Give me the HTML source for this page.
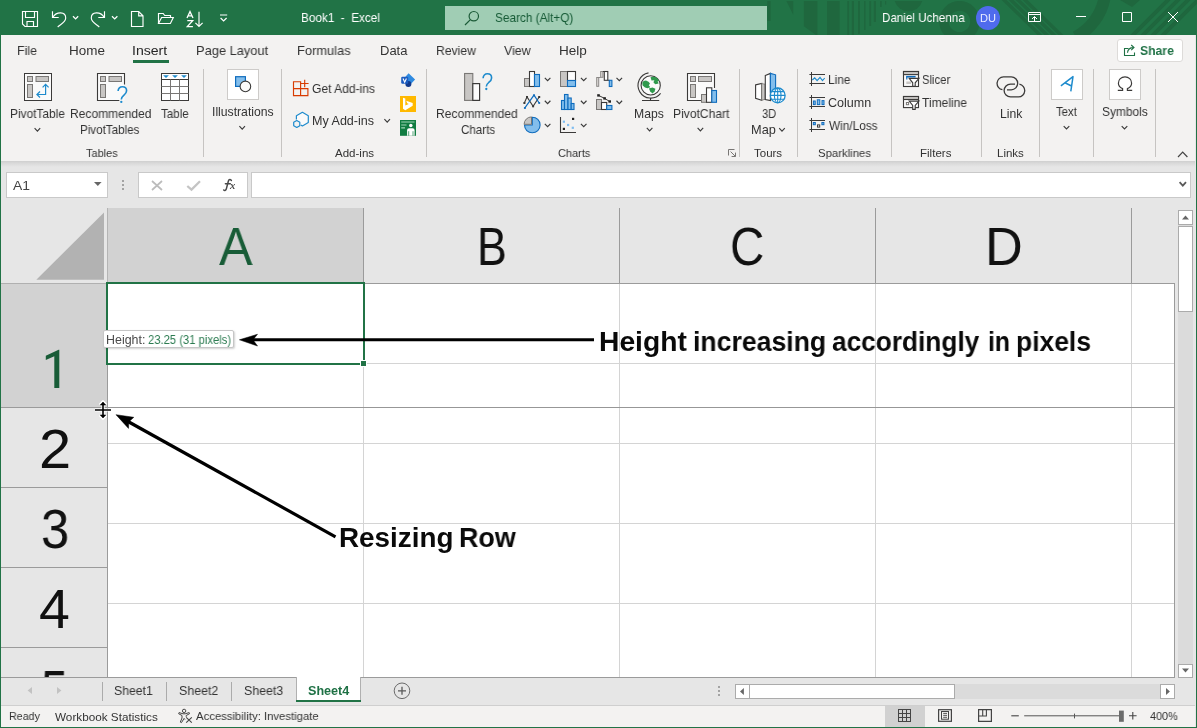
<!DOCTYPE html>
<html><head><meta charset="utf-8"><title>Book1 - Excel</title>
<style>
html,body{margin:0;padding:0;}
body{width:1197px;height:728px;overflow:hidden;background:#e6e6e6;position:relative;font-family:"Liberation Sans",sans-serif;}
.t{position:absolute;white-space:pre;transform-origin:0 0;will-change:transform;}
.r{position:absolute;box-sizing:border-box;}
svg.ov{position:absolute;left:0;top:0;}
#root{position:absolute;left:0;top:0;width:1197px;height:728px;overflow:hidden;}
</style></head><body>
<div id="root">
<div class="r" style="left:0px;top:0px;width:1197.00px;height:35.00px;background:#217346;"></div>
<svg class="ov" width="1197" height="35" viewBox="0 0 1197 35"><g fill="#1f673e" stroke="none"><rect x="767.3" y="1" width="3.3" height="20"/><path d="M786.4 1 H793.2 V14.7 Z"/><path d="M803.9 1 H817.4 V35 H816 L803.9 26.2 Z"/><rect x="827" y="1" width="12.6" height="34"/><rect x="847.3" y="1" width="1.8" height="34"/><rect x="851.8" y="1" width="2.2" height="34"/><rect x="858" y="1" width="1.8" height="32.8"/><rect x="864.2" y="1" width="1.3" height="29"/><rect x="869.3" y="1" width="1.8" height="25"/><rect x="873.8" y="1" width="2.2" height="21"/><rect x="880" y="1" width="1.7" height="6"/><rect x="885" y="1" width="1.2" height="3.5"/><path d="M894.7 1 A14.4 14.4 0 0 0 922.3 1 Z"/></g><circle cx="959.5" cy="21.4" r="15.5" fill="none" stroke="#1f673e" stroke-width="9.6"/><g stroke="#1f673e" stroke-width="3.4" fill="none"><path d="M1002 -2 L1042 37 M1009 -2 L1049 37 M1016 -2 L1056 37 M1023 -2 L1063 37"/></g><path d="M1104.5 -2 A56 56 0 0 1 1075.7 37" fill="none" stroke="#1f673e" stroke-width="12"/><g stroke="#1f673e" stroke-width="4" fill="none"><path d="M1131 37 L1170 -2 M1141 37 L1180 -2 M1151 37 L1190 -2 M1161 37 L1200 -2"/></g><path d="M1120 0 H1140 L1132 7 Z" fill="#1f673e"/></svg>
<div class="r" style="left:445px;top:6px;width:322.00px;height:24.00px;background:#a0cdb4;"></div>
<span class="t" style="left:301.05px;top:9.00px;font-size:13px;line-height:17px;color:#fff;transform:scaleX(0.9024);">Book1  -  Excel</span>
<span class="t" style="left:495.00px;top:9.00px;font-size:13px;line-height:17px;color:#155a35;transform:scaleX(0.9071);">Search (Alt+Q)</span>
<span class="t" style="left:881.76px;top:9.00px;font-size:13px;line-height:17px;color:#fff;transform:scaleX(0.8945);">Daniel Uchenna</span>
<div class="r" style="left:1px;top:35px;width:1194.00px;height:125.50px;background:#f3f2f1;"></div>
<div class="r" style="left:1px;top:160.5px;width:1194.00px;height:6.50px;background:linear-gradient(#cfcfcf,#dadada 40%,#e6e6e6);"></div>
<span class="t" style="left:17.30px;top:42.00px;font-size:13px;line-height:17px;color:#333333;transform:scaleX(0.9561);">File</span>
<span class="t" style="left:69.11px;top:42.00px;font-size:13px;line-height:17px;color:#333333;transform:scaleX(1.0363);">Home</span>
<span class="t" style="left:132.30px;top:42.00px;font-size:13px;line-height:17px;color:#262626;transform:scaleX(1.0816);">Insert</span>
<span class="t" style="left:196.16px;top:42.00px;font-size:13px;line-height:17px;color:#333333;transform:scaleX(0.9875);">Page Layout</span>
<span class="t" style="left:297.36px;top:42.00px;font-size:13px;line-height:17px;color:#333333;transform:scaleX(0.9886);">Formulas</span>
<span class="t" style="left:379.67px;top:42.00px;font-size:13px;line-height:17px;color:#333333;transform:scaleX(0.9830);">Data</span>
<span class="t" style="left:435.62px;top:42.00px;font-size:13px;line-height:17px;color:#333333;transform:scaleX(0.9364);">Review</span>
<span class="t" style="left:504.25px;top:42.00px;font-size:13px;line-height:17px;color:#333333;transform:scaleX(0.9553);">View</span>
<span class="t" style="left:558.51px;top:42.00px;font-size:13px;line-height:17px;color:#333333;transform:scaleX(1.0417);">Help</span>
<div class="r" style="left:133px;top:60.3px;width:35.70px;height:2.50px;background:#217346;"></div>
<div class="r" style="left:1116.6px;top:38.6px;width:66.80px;height:23.00px;background:#fff;border:1px solid #dddbd9;border-radius:3px;"></div>
<span class="t" style="left:1140.17px;top:42.00px;font-size:13px;line-height:17px;color:#1f7145;transform:scaleX(0.9364);font-weight:700;">Share</span>
<span class="t" style="left:10.42px;top:106.00px;font-size:12.2px;line-height:16px;color:#333333;transform:scaleX(0.9753);">PivotTable</span>
<span class="t" style="left:69.51px;top:106.00px;font-size:12.2px;line-height:16px;color:#333333;transform:scaleX(0.9870);">Recommended</span>
<span class="t" style="left:80.45px;top:122.00px;font-size:12.2px;line-height:16px;color:#333333;transform:scaleX(0.9525);">PivotTables</span>
<span class="t" style="left:160.96px;top:106.00px;font-size:12.2px;line-height:16px;color:#333333;transform:scaleX(0.9542);">Table</span>
<span class="t" style="left:211.50px;top:104.00px;font-size:12.2px;line-height:16px;color:#333333;transform:scaleX(1.0000);">Illustrations</span>
<span class="t" style="left:312.11px;top:81.00px;font-size:12.2px;line-height:16px;color:#333333;transform:scaleX(0.9896);">Get Add-ins</span>
<span class="t" style="left:311.67px;top:113.00px;font-size:12.2px;line-height:16px;color:#333333;transform:scaleX(1.0297);">My Add-ins</span>
<span class="t" style="left:436.41px;top:106.00px;font-size:12.2px;line-height:16px;color:#333333;transform:scaleX(0.9907);">Recommended</span>
<span class="t" style="left:460.93px;top:122.00px;font-size:12.2px;line-height:16px;color:#333333;transform:scaleX(0.9528);">Charts</span>
<span class="t" style="left:634.41px;top:106.00px;font-size:12.2px;line-height:16px;color:#333333;transform:scaleX(0.9947);">Maps</span>
<span class="t" style="left:672.51px;top:106.00px;font-size:12.2px;line-height:16px;color:#333333;transform:scaleX(0.9902);">PivotChart</span>
<span class="t" style="left:761.59px;top:106.00px;font-size:12.2px;line-height:16px;color:#333333;transform:scaleX(0.9110);">3D</span>
<span class="t" style="left:750.65px;top:122.00px;font-size:12.2px;line-height:16px;color:#333333;transform:scaleX(1.0472);">Map</span>
<span class="t" style="left:827.73px;top:72.00px;font-size:12.2px;line-height:16px;color:#333333;transform:scaleX(0.9745);">Line</span>
<span class="t" style="left:828.08px;top:95.00px;font-size:12.2px;line-height:16px;color:#333333;transform:scaleX(1.0308);">Column</span>
<span class="t" style="left:828.65px;top:118.00px;font-size:12.2px;line-height:16px;color:#333333;transform:scaleX(0.9678);">Win/Loss</span>
<span class="t" style="left:921.79px;top:72.00px;font-size:12.2px;line-height:16px;color:#333333;transform:scaleX(0.9228);">Slicer</span>
<span class="t" style="left:922.45px;top:95.00px;font-size:12.2px;line-height:16px;color:#333333;transform:scaleX(0.9877);">Timeline</span>
<span class="t" style="left:999.50px;top:106.00px;font-size:12.2px;line-height:16px;color:#333333;transform:scaleX(1.0023);">Link</span>
<span class="t" style="left:1056.17px;top:104.00px;font-size:12.2px;line-height:16px;color:#333333;transform:scaleX(0.9342);">Text</span>
<span class="t" style="left:1101.66px;top:104.00px;font-size:12.2px;line-height:16px;color:#333333;transform:scaleX(0.9771);">Symbols</span>
<span class="t" style="left:86.16px;top:146.00px;font-size:11.5px;line-height:14px;color:#333333;transform:scaleX(0.9540);">Tables</span>
<span class="t" style="left:334.70px;top:146.00px;font-size:11.5px;line-height:14px;color:#333333;transform:scaleX(1.0026);">Add-ins</span>
<span class="t" style="left:558.48px;top:146.00px;font-size:11.5px;line-height:14px;color:#333333;transform:scaleX(0.9544);">Charts</span>
<span class="t" style="left:754.05px;top:146.00px;font-size:11.5px;line-height:14px;color:#333333;transform:scaleX(0.9836);">Tours</span>
<span class="t" style="left:818.01px;top:146.00px;font-size:11.5px;line-height:14px;color:#333333;transform:scaleX(0.9867);">Sparklines</span>
<span class="t" style="left:920.40px;top:146.00px;font-size:11.5px;line-height:14px;color:#333333;transform:scaleX(1.0033);">Filters</span>
<span class="t" style="left:996.62px;top:146.00px;font-size:11.5px;line-height:14px;color:#333333;transform:scaleX(0.9824);">Links</span>
<div class="r" style="left:203px;top:69px;width:1.00px;height:88.00px;background:#c6c4c2;"></div>
<div class="r" style="left:281px;top:69px;width:1.00px;height:88.00px;background:#c6c4c2;"></div>
<div class="r" style="left:426px;top:69px;width:1.00px;height:88.00px;background:#c6c4c2;"></div>
<div class="r" style="left:739px;top:69px;width:1.00px;height:88.00px;background:#c6c4c2;"></div>
<div class="r" style="left:797px;top:69px;width:1.00px;height:88.00px;background:#c6c4c2;"></div>
<div class="r" style="left:891px;top:69px;width:1.00px;height:88.00px;background:#c6c4c2;"></div>
<div class="r" style="left:981px;top:69px;width:1.00px;height:88.00px;background:#c6c4c2;"></div>
<div class="r" style="left:1039px;top:69px;width:1.00px;height:88.00px;background:#c6c4c2;"></div>
<div class="r" style="left:1093px;top:69px;width:1.00px;height:88.00px;background:#c6c4c2;"></div>
<div class="r" style="left:1155px;top:69px;width:1.00px;height:88.00px;background:#c6c4c2;"></div>
<div class="r" style="left:227px;top:69px;width:32.00px;height:31.00px;background:#fff;border:1px solid #cdcbc9;"></div>
<div class="r" style="left:1051px;top:69px;width:32.00px;height:31.00px;background:#fff;border:1px solid #cdcbc9;"></div>
<div class="r" style="left:1109px;top:69px;width:32.00px;height:31.00px;background:#fff;border:1px solid #cdcbc9;"></div>
<div class="r" style="left:6px;top:172px;width:102.00px;height:26.00px;background:#fff;border:1px solid #c9c9c9;"></div>
<span class="t" style="left:13.00px;top:177.00px;font-size:13px;line-height:17px;color:#444;transform:scaleX(1.0689);">A1</span>
<div class="r" style="left:138px;top:172px;width:110.00px;height:26.00px;background:#fff;border:1px solid #c9c9c9;"></div>
<div class="r" style="left:251px;top:172px;width:940.00px;height:26.00px;background:#fff;border:1px solid #c9c9c9;"></div>
<span class="t" style="left:229.60px;top:179.00px;font-size:10px;line-height:13px;color:#4a4a4a;transform:scaleX(1.0505);font-weight:700;font-style:italic;font-family:'Liberation Serif', serif;">x</span>
<div class="r" style="left:107px;top:283px;width:1068.00px;height:394.00px;background:#fff;"></div>
<div class="r" style="left:107px;top:208px;width:257.00px;height:74.00px;background:#d2d2d2;"></div>
<div class="r" style="left:1px;top:284px;width:106.00px;height:123.00px;background:#d2d2d2;"></div>
<div class="r" style="left:108px;top:363px;width:1067.00px;height:1.00px;background:#d4d4d4;"></div>
<div class="r" style="left:108px;top:443px;width:1067.00px;height:1.00px;background:#d4d4d4;"></div>
<div class="r" style="left:108px;top:523px;width:1067.00px;height:1.00px;background:#d4d4d4;"></div>
<div class="r" style="left:108px;top:603px;width:1067.00px;height:1.00px;background:#d4d4d4;"></div>
<div class="r" style="left:363px;top:284px;width:1.00px;height:393.00px;background:#d4d4d4;"></div>
<div class="r" style="left:619px;top:284px;width:1.00px;height:393.00px;background:#d4d4d4;"></div>
<div class="r" style="left:875px;top:284px;width:1.00px;height:393.00px;background:#d4d4d4;"></div>
<div class="r" style="left:1131px;top:284px;width:1.00px;height:393.00px;background:#d4d4d4;"></div>
<div class="r" style="left:363px;top:208px;width:1.00px;height:75.00px;background:#9b9b9b;"></div>
<div class="r" style="left:619px;top:208px;width:1.00px;height:75.00px;background:#9b9b9b;"></div>
<div class="r" style="left:875px;top:208px;width:1.00px;height:75.00px;background:#9b9b9b;"></div>
<div class="r" style="left:1131px;top:208px;width:1.00px;height:75.00px;background:#9b9b9b;"></div>
<div class="r" style="left:107px;top:282.5px;width:1068.00px;height:1.00px;background:#9b9b9b;"></div>
<div class="r" style="left:107px;top:208px;width:1.00px;height:74.00px;background:#b4b4b4;"></div>
<div class="r" style="left:1px;top:283px;width:105.00px;height:1.00px;background:#b0b0b0;"></div>
<div class="r" style="left:107px;top:283px;width:1.00px;height:394.00px;background:#9b9b9b;"></div>
<div class="r" style="left:1174px;top:283px;width:1.00px;height:395.00px;background:#9b9b9b;"></div>
<div class="r" style="left:1px;top:677px;width:1174.00px;height:1.00px;background:#9b9b9b;"></div>
<div class="r" style="left:1px;top:406.5px;width:106.00px;height:1.00px;background:#9b9b9b;"></div>
<div class="r" style="left:1px;top:486.5px;width:106.00px;height:1.00px;background:#9b9b9b;"></div>
<div class="r" style="left:1px;top:566.5px;width:106.00px;height:1.00px;background:#9b9b9b;"></div>
<div class="r" style="left:1px;top:646.5px;width:106.00px;height:1.00px;background:#9b9b9b;"></div>
<div class="r" style="left:107px;top:406.5px;width:1068.00px;height:1.00px;background:#979797;"></div>
<div class="r" style="left:106px;top:282px;width:259.00px;height:83.00px;background:transparent;border:2px solid #217346;"></div>
<div class="r" style="left:360px;top:360px;width:7.00px;height:7.00px;background:#217346;border:1px solid #fff;"></div>
<span class="t" style="left:219.21px;top:215.00px;font-size:53.8px;line-height:62px;color:#185c37;transform:scaleX(0.9328);">A</span>
<span class="t" style="left:477.24px;top:215.00px;font-size:53.8px;line-height:62px;color:#111;transform:scaleX(0.8307);">B</span>
<span class="t" style="left:730.12px;top:215.00px;font-size:53.8px;line-height:62px;color:#111;transform:scaleX(0.8814);">C</span>
<span class="t" style="left:985.02px;top:215.00px;font-size:53.8px;line-height:62px;color:#111;transform:scaleX(0.9718);">D</span>
<span class="t" style="left:38.64px;top:417.00px;font-size:55.5px;line-height:64px;color:#111;transform:scaleX(1.0414);">2</span>
<span class="t" style="left:40.78px;top:497.00px;font-size:55.5px;line-height:64px;color:#111;transform:scaleX(0.9146);">3</span>
<span class="t" style="left:38.75px;top:577.00px;font-size:55.5px;line-height:64px;color:#111;transform:scaleX(0.9964);">4</span>
<div class="r" style="left:1px;top:648px;width:106.00px;height:29.00px;background:#e6e6e6;overflow:hidden;"><span class="t" style="left:40.39px;top:10.00px;font-size:55.5px;line-height:64px;color:#111;transform:scaleX(0.8691);">5</span></div>
<span class="t" style="left:599.04px;top:325.00px;font-size:27.3px;line-height:33px;color:#0a0a0a;transform:scaleX(1.0344);font-weight:700;">Height</span>
<span class="t" style="left:692.95px;top:325.00px;font-size:27.3px;line-height:33px;color:#0a0a0a;transform:scaleX(0.9755);font-weight:700;">increasing</span>
<span class="t" style="left:831.93px;top:325.00px;font-size:27.3px;line-height:33px;color:#0a0a0a;transform:scaleX(0.9613);font-weight:700;">accordingly</span>
<span class="t" style="left:987.87px;top:325.00px;font-size:27.3px;line-height:33px;color:#0a0a0a;transform:scaleX(0.9082);font-weight:700;">in</span>
<span class="t" style="left:1016.16px;top:325.00px;font-size:27.3px;line-height:33px;color:#0a0a0a;transform:scaleX(0.9691);font-weight:700;">pixels</span>
<span class="t" style="left:339.05px;top:521.00px;font-size:27.8px;line-height:33px;color:#0a0a0a;transform:scaleX(1.0014);font-weight:700;">Resizing</span>
<span class="t" style="left:459.21px;top:521.00px;font-size:27.8px;line-height:33px;color:#0a0a0a;transform:scaleX(0.9684);font-weight:700;">Row</span>
<div class="r" style="left:102.6px;top:330.3px;width:131.00px;height:17.70px;background:#fff;border:1px solid #c6c6c6;border-radius:2px;box-shadow:1px 1px 2px rgba(0,0,0,.18);"></div>
<span class="t" style="left:106.00px;top:332.00px;font-size:12.4px;line-height:16px;color:#4a4a4a;transform:scaleX(1.0027);">Height:</span>
<span class="t" style="left:147.86px;top:332.00px;font-size:12.4px;line-height:16px;color:#2b7b50;transform:scaleX(0.9065);">23.25 (31 pixels)</span>
<div class="r" style="left:1178px;top:224px;width:15.00px;height:440.00px;background:#dbdbdb;"></div>
<div class="r" style="left:1178px;top:210px;width:15.00px;height:15.00px;background:#fff;border:1px solid #ababab;"></div>
<div class="r" style="left:1178px;top:225.5px;width:15.00px;height:86.00px;background:#fff;border:1px solid #ababab;"></div>
<div class="r" style="left:1178px;top:663.5px;width:15.00px;height:14.00px;background:#fff;border:1px solid #ababab;"></div>
<div class="r" style="left:955px;top:684px;width:206.00px;height:15.00px;background:#dbdbdb;"></div>
<div class="r" style="left:735px;top:684px;width:15.00px;height:15.00px;background:#fff;border:1px solid #ababab;"></div>
<div class="r" style="left:749px;top:684px;width:206.00px;height:15.00px;background:#fff;border:1px solid #ababab;"></div>
<div class="r" style="left:1160px;top:684px;width:15.00px;height:15.00px;background:#fff;border:1px solid #ababab;"></div>
<div class="r" style="left:296.3px;top:677px;width:64.40px;height:24.60px;background:#fff;border-left:1px solid #b0b0b0;border-right:1px solid #b0b0b0;"></div>
<div class="r" style="left:296.3px;top:699.6px;width:64.40px;height:2.00px;background:#217346;"></div>
<div class="r" style="left:101.5px;top:681.5px;width:1.00px;height:19.00px;background:#ababab;"></div>
<div class="r" style="left:165.5px;top:681.5px;width:1.00px;height:19.00px;background:#ababab;"></div>
<div class="r" style="left:230.5px;top:681.5px;width:1.00px;height:19.00px;background:#ababab;"></div>
<span class="t" style="left:113.97px;top:683.00px;font-size:12.6px;line-height:16px;color:#333333;transform:scaleX(0.9691);">Sheet1</span>
<span class="t" style="left:178.66px;top:683.00px;font-size:12.6px;line-height:16px;color:#333333;transform:scaleX(0.9820);">Sheet2</span>
<span class="t" style="left:243.86px;top:683.00px;font-size:12.6px;line-height:16px;color:#333333;transform:scaleX(0.9794);">Sheet3</span>
<span class="t" style="left:307.75px;top:683.00px;font-size:12.6px;line-height:16px;color:#1f7145;transform:scaleX(1.0000);font-weight:700;">Sheet4</span>
<div class="r" style="left:1px;top:705px;width:1194.00px;height:21.50px;background:#f3f2f1;border-top:1px solid #cfcfcf;"></div>
<div class="r" style="left:885px;top:706px;width:40.00px;height:20.50px;background:#d1d1d1;"></div>
<span class="t" style="left:8.66px;top:709.00px;font-size:11.5px;line-height:14px;color:#333333;transform:scaleX(0.9304);">Ready</span>
<span class="t" style="left:55.05px;top:710.00px;font-size:11.5px;line-height:14px;color:#333333;transform:scaleX(1.0199);">Workbook Statistics</span>
<span class="t" style="left:196.20px;top:709.00px;font-size:11.5px;line-height:14px;color:#333333;transform:scaleX(0.9843);">Accessibility: Investigate</span>
<span class="t" style="left:1149.66px;top:709.00px;font-size:11.5px;line-height:14px;color:#333333;transform:scaleX(0.9410);">400%</span>
<div class="r" style="left:0px;top:35px;width:1.00px;height:693.00px;background:#217346;"></div>
<div class="r" style="left:1195.6px;top:35px;width:1.40px;height:693.00px;background:#217346;"></div>
<div class="r" style="left:0px;top:726.5px;width:1197.00px;height:1.50px;background:#217346;"></div>
<svg class="ov" width="1197" height="728" viewBox="0 0 1197 728">
<circle cx="988" cy="18" r="12" fill="#4f6bed"/>
<text x="980" y="22.2" font-family="Liberation Sans, sans-serif" font-size="11.5" fill="#e8ecff" textLength="16" lengthAdjust="spacingAndGlyphs">DU</text>
<g stroke="#fff" fill="none" stroke-width="1.15">
<path d="M22.5 11.5 H37.5 V26.5 H25 L22.5 24 Z M25.5 11.5 V17.5 H34.5 V11.5 M27 26.5 V21.5 H33.5 V26.5"/>
<path d="M52.5 11.3 V17.5 H58.7 M53 17 C56.5 11.5 65.7 11.2 65.7 18 C65.7 22 61 24 57.7 27"/>
<path d="M104.5 11.3 V17.5 H98.3 M104 17 C100.5 11.5 91.3 11.2 91.3 18 C91.3 22 96 24 99.3 27"/>
<path d="M73 16.3 L75.6 18.9 L78.2 16.3" stroke-width="1.3"/><path d="M112 16.3 L114.7 18.9 L117.4 16.3" stroke-width="1.3"/>
<path d="M131.5 11.5 H138.7 L143 15.8 V26.5 H131.5 Z M138.7 11.5 V15.8 H143"/>
<path d="M158.5 23.5 V13.5 H163.2 L164.7 15.5 H170.5 V17.5 M158.5 23.5 L161.6 17.5 H173.3 L170.4 23.5 Z"/>
<path d="M187 18 L190 11.6 L193 18 M188.1 15.8 H191.9 M187.3 20.6 H192.7 L187.3 26.6 H192.9" stroke-width="1.3"/>
<path d="M199 11.8 V26.3 M195.4 22.8 L199 26.4 L202.6 22.8"/>
<path d="M220 15 H227.2 M220.6 18 L223.6 21 L226.6 18" stroke-width="1.2"/>
<path d="M1028.5 12.5 H1040.5 V21.5 H1028.5 Z M1028.5 14.5 H1040.5 M1034.5 21 V16.8 M1032 19 L1034.5 16.5 L1037 19" stroke-width="1"/>
<path d="M1076 16.5 H1086 M1122.5 12.5 H1131.5 V21.5 H1122.5 Z M1168 12 L1178 22 M1178 12 L1168 22" stroke-width="1"/>
</g>
<g stroke="#1b5a37" fill="none" stroke-width="1.2"><circle cx="473.8" cy="16.2" r="4.7"/><path d="M470.4 19.6 L465 25"/></g>
<g stroke="#1f7145" fill="none" stroke-width="1.1"><path d="M1128.5 48.5 H1124.5 V55.5 H1134.5 V52.5"/><path d="M1127.5 52.8 C1127.7 49.5 1130 47.6 1133.5 47.6 M1131.2 45 L1134 47.6 L1131.2 50.2"/></g>
<rect x="24.5" y="73.5" width="27.00" height="27.00" stroke="#3b3a39" fill="#fafafa" stroke-width="1" />
<rect x="27.5" y="76.5" width="5.00" height="5.00" stroke="#797775" fill="#c8c6c4" stroke-width="1" />
<rect x="36" y="76.5" width="12.50" height="5.00" stroke="#797775" fill="#c8c6c4" stroke-width="1" />
<rect x="27.5" y="84.5" width="5.00" height="13.00" stroke="#797775" fill="#c8c6c4" stroke-width="1" />
<path d="M37.2 94.5 H45.6 V84.8 M40 91.5 L36.9 94.5 L40 97.5 M42.6 87.3 L45.6 84.3 L48.6 87.3" stroke="#1e8bcd" fill="none" stroke-width="1.2" />
<path d="M97.5 73.5 H124.5 V100.5 H97.5 Z" stroke="none" fill="#fafafa" stroke-width="0" />
<path d="M119.3 100.5 H97.5 V73.5 H124.5 V84.6" stroke="#3b3a39" fill="none" stroke-width="1.1" />
<rect x="100.5" y="76.5" width="5.00" height="5.00" stroke="#797775" fill="#c8c6c4" stroke-width="1" />
<rect x="109" y="76.5" width="12.50" height="5.00" stroke="#797775" fill="#c8c6c4" stroke-width="1" />
<rect x="100.5" y="84.5" width="5.00" height="13.00" stroke="#797775" fill="#c8c6c4" stroke-width="1" />
<g transform="translate(117.2 85.9)"><path d="M0.9 5.2 C0.9 2.4 2.8 0.8 5.2 0.8 C7.8 0.8 9.4 2.6 9.4 4.9 C9.4 7.2 8 8.3 6.5 9.5 C5 10.7 4.1 11.6 4.1 13.6" stroke="#1e8bcd" fill="none" stroke-width="1.6"/><circle cx="4.1" cy="16" r="1.15" fill="#1e8bcd"/></g>
<rect x="161.5" y="73.5" width="27.00" height="27.00" stroke="#3b3a39" fill="#ffffff" stroke-width="1" />
<path d="M161.5 79.5 H188.5" stroke="#3b3a39" fill="none" stroke-width="1" />
<path d="M161.5 86.5 H188.5 M161.5 93.5 H188.5 M170.5 79.5 V100.5 M179.5 79.5 V100.5" stroke="#797775" fill="none" stroke-width="1" />
<path d="M163.1 75.2 H168.9 L166 78 Z" stroke="none" fill="#1e8bcd" stroke-width="0" />
<path d="M172.1 75.2 H177.9 L175 78 Z" stroke="none" fill="#1e8bcd" stroke-width="0" />
<path d="M181.1 75.2 H186.9 L184 78 Z" stroke="none" fill="#1e8bcd" stroke-width="0" />
<path d="M34.60 128.15 L37.40 131.05 L40.20 128.15" stroke="#3b3b3b" fill="none" stroke-width="1.15" stroke-linejoin="miter"/>
<rect x="235.6" y="76.7" width="9.80" height="9.70" stroke="#0f6cbd" fill="#83beec" stroke-width="1.2" />
<circle cx="245.4" cy="86.4" r="5.3" stroke="#3b3a39" fill="#fafafa" stroke-width="1.1" />
<path d="M239.40 126.15 L242.20 129.05 L245.00 126.15" stroke="#3b3b3b" fill="none" stroke-width="1.15" stroke-linejoin="miter"/>
<path d="M293.5 81.7 H300.6 V95.6 H293.5 Z M293.5 88.6 H307.9 V95.6 H300.6 M304.7 79.7 V87.3 M301 83.5 H308.6" stroke="#d83b01" fill="none" stroke-width="1.15" />
<path d="M296.4 119.6 V115.8 L302.4 112.3 L308.3 115.8 V122.4 L302.4 125.9 L300.8 125" stroke="#1e8bcd" fill="#fafafa" stroke-width="1.2" stroke-linejoin="round"/>
<path d="M296.8 120.5 L299.8 122.2 V125.7 L296.8 127.5 L293.7 125.7 V122.2 Z" stroke="#1e8bcd" fill="#f3f2f1" stroke-width="1.2" stroke-linejoin="round"/>
<path d="M384.40 119.15 L387.20 122.05 L390.00 119.15" stroke="#3b3b3b" fill="none" stroke-width="1.15" stroke-linejoin="miter"/>
<path d="M408.6 73.2 L415.1 79.6 L409.4 85.4 L403 79.6 Z" fill="#2f8ae0"/>
<circle cx="408.4" cy="83.9" r="3" fill="#123a8c"/>
<rect x="401.2" y="76.8" width="7" height="7" rx="1.2" fill="#1b5cc0"/>
<path d="M403 78.6 L404.7 82.3 L406.4 78.6" stroke="#fff" fill="none" stroke-width="1.1"/>
<rect x="400" y="96" width="16" height="16" fill="#ffb900"/>
<path d="M403 97.8 L405.3 98.6 V105.6 L408.8 104 L407.2 103.2 L406.2 100.7 L412.7 103 V105.8 L405.3 110.2 L403 108.8 Z" fill="#fff"/>
<rect x="400" y="120" width="16" height="15.8" fill="#107c41"/>
<path d="M401.2 122 H414.5 M401.2 125 H406.5 M401.2 127.9 H405" stroke="#9fd5b7" stroke-width="1.1"/>
<circle cx="410.8" cy="125.5" r="1.75" fill="#fff"/><path d="M407.1 135.8 V130 Q407.1 128.2 409 128.2 H412.7 Q414.6 128.2 414.6 130 V135.8 Z" fill="#fff"/>
<path d="M408.7 131.2 V135.8 M413 131.2 V135.8" stroke="#107c41" stroke-width="0.7"/>
<rect x="464.6" y="73.5" width="8.20" height="26.90" stroke="#797775" fill="#c8c6c4" stroke-width="1.1" />
<rect x="472.8" y="83.6" width="6.80" height="16.80" stroke="#3b3a39" fill="#fcfcfc" stroke-width="1.2" />
<g transform="translate(482.2 73)"><path d="M0.9 5.2 C0.9 2.4 2.8 0.8 5.2 0.8 C7.8 0.8 9.4 2.6 9.4 4.9 C9.4 7.2 8 8.3 6.5 9.5 C5 10.7 4.1 11.6 4.1 13.6" stroke="#1e8bcd" fill="none" stroke-width="1.6"/><circle cx="4.1" cy="16" r="1.15" fill="#1e8bcd"/></g>
<rect x="524.5" y="78.5" width="5.00" height="8.00" stroke="#797775" fill="#c8c6c4" stroke-width="1" />
<rect x="529.5" y="71.5" width="5.00" height="15.00" stroke="#3b3a39" fill="#ffffff" stroke-width="1.1" />
<rect x="534.5" y="74.5" width="5.00" height="12.00" stroke="#0f6cbd" fill="#83beec" stroke-width="1.1" />
<path d="M524.3 103 L527 97 L533.1 106.3 L539.2 97" stroke="#3b3a39" fill="none" stroke-width="1.1" />
<path d="M524.7 108.2 L534 95.1 L539.2 103" stroke="#0f6cbd" fill="none" stroke-width="1.2" />
<rect x="523.4" y="102" width="2.00" height="2.00" stroke="none" fill="#3b3a39" stroke-width="0" />
<rect x="526" y="96" width="2.00" height="2.00" stroke="none" fill="#3b3a39" stroke-width="0" />
<rect x="532.1" y="105.3" width="2.00" height="2.00" stroke="none" fill="#3b3a39" stroke-width="0" />
<rect x="538.2" y="96" width="2.00" height="2.00" stroke="none" fill="#3b3a39" stroke-width="0" />
<circle cx="524.9" cy="108" r="1.1" stroke="none" fill="#0f6cbd" stroke-width="0" />
<circle cx="534" cy="95.3" r="1.1" stroke="none" fill="#0f6cbd" stroke-width="0" />
<circle cx="539.2" cy="103" r="1.1" stroke="none" fill="#0f6cbd" stroke-width="0" />
<path d="M532.3 125 V117.2 A7.8 7.8 0 1 1 524.5 125 Z" stroke="#0f6cbd" fill="#83beec" stroke-width="1.1" />
<path d="M531.5 124.3 H524.1 A7.4 7.4 0 0 1 531.5 116.9 Z" stroke="#797775" fill="#c8c6c4" stroke-width="1" />
<rect x="560.5" y="71.5" width="7.00" height="15.00" stroke="#797775" fill="#c8c6c4" stroke-width="1" />
<rect x="567.5" y="71.5" width="8.00" height="9.00" stroke="#3b3a39" fill="#fdfdfd" stroke-width="1.1" />
<rect x="567.5" y="80.5" width="8.00" height="6.00" stroke="#0f6cbd" fill="#83beec" stroke-width="1.1" />
<rect x="561.5" y="100.5" width="3.00" height="9.00" stroke="#0f6cbd" fill="#83beec" stroke-width="1.1" />
<rect x="564.5" y="94.5" width="3.50" height="15.00" stroke="#0f6cbd" fill="#83beec" stroke-width="1.1" />
<rect x="568" y="98" width="3.20" height="11.50" stroke="#0f6cbd" fill="#83beec" stroke-width="1.1" />
<rect x="571.2" y="103.5" width="2.80" height="6.00" stroke="#0f6cbd" fill="#83beec" stroke-width="1.1" />
<path d="M560.5 117 V132.5 H576" stroke="#3b3a39" fill="none" stroke-width="1.1" />
<rect x="572.0" y="117.80000000000001" width="2.20" height="2.20" stroke="none" fill="#222" stroke-width="0" />
<rect x="562.8" y="127.80000000000001" width="2.20" height="2.20" stroke="none" fill="#222" stroke-width="0" />
<rect x="562.8" y="120.60000000000001" width="2.20" height="2.20" stroke="none" fill="#7fbdf0" stroke-width="0" />
<rect x="567.0" y="123.9" width="2.20" height="2.20" stroke="none" fill="#7fbdf0" stroke-width="0" />
<rect x="571.6999999999999" y="126.7" width="2.20" height="2.20" stroke="none" fill="#7fbdf0" stroke-width="0" />
<rect x="596.7" y="77.5" width="2.00" height="8.80" stroke="#8a8886" fill="#e1dfdd" stroke-width="1" />
<rect x="600.7" y="71.5" width="2.20" height="5.80" stroke="#8a8886" fill="#e1dfdd" stroke-width="1" />
<path d="M598.7 77.5 H600.7" stroke="#8a8886" fill="none" stroke-width="1" />
<rect x="604.3" y="71.5" width="3.50" height="8.80" stroke="#3b3a39" fill="#ffffff" stroke-width="1.1" />
<path d="M602.9 71.5 H604.3 M607.8 80.3 H609.3" stroke="#3b3a39" fill="none" stroke-width="1" />
<rect x="609.3" y="80.3" width="2.60" height="6.20" stroke="#0f6cbd" fill="#83beec" stroke-width="1.1" />
<rect x="596.5" y="99.5" width="5.00" height="10.00" stroke="#797775" fill="#c8c6c4" stroke-width="1" />
<rect x="601.5" y="102.5" width="5.20" height="7.00" stroke="#3b3a39" fill="#ffffff" stroke-width="1.1" />
<rect x="606.7" y="105.5" width="5.20" height="4.00" stroke="#0f6cbd" fill="#83beec" stroke-width="1.1" />
<path d="M598.5 95.4 L604.6 98.4 L609.7 101.5" stroke="#3b3a39" fill="none" stroke-width="1" />
<rect x="597.2" y="94.2" width="2.60" height="2.40" stroke="none" fill="#222" stroke-width="0" />
<rect x="603.3000000000001" y="97.2" width="2.60" height="2.40" stroke="none" fill="#222" stroke-width="0" />
<rect x="608.4000000000001" y="100.3" width="2.60" height="2.40" stroke="none" fill="#222" stroke-width="0" />
<path d="M544.80 77.85 L547.60 80.75 L550.40 77.85" stroke="#3b3b3b" fill="none" stroke-width="1.15" stroke-linejoin="miter"/>
<path d="M544.80 100.75 L547.60 103.65 L550.40 100.75" stroke="#3b3b3b" fill="none" stroke-width="1.15" stroke-linejoin="miter"/>
<path d="M544.80 123.85 L547.60 126.75 L550.40 123.85" stroke="#3b3b3b" fill="none" stroke-width="1.15" stroke-linejoin="miter"/>
<path d="M580.90 77.85 L583.70 80.75 L586.50 77.85" stroke="#3b3b3b" fill="none" stroke-width="1.15" stroke-linejoin="miter"/>
<path d="M580.90 100.75 L583.70 103.65 L586.50 100.75" stroke="#3b3b3b" fill="none" stroke-width="1.15" stroke-linejoin="miter"/>
<path d="M580.90 123.85 L583.70 126.75 L586.50 123.85" stroke="#3b3b3b" fill="none" stroke-width="1.15" stroke-linejoin="miter"/>
<path d="M616.50 77.85 L619.30 80.75 L622.10 77.85" stroke="#3b3b3b" fill="none" stroke-width="1.15" stroke-linejoin="miter"/>
<path d="M616.50 100.75 L619.30 103.65 L622.10 100.75" stroke="#3b3b3b" fill="none" stroke-width="1.15" stroke-linejoin="miter"/>
<circle cx="650.7" cy="85.4" r="9.6" stroke="#3b3a39" fill="#fbfbfb" stroke-width="1.1" />
<path d="M642.3 82.5 Q643.5 80.5 646 80.6 L648.5 81.8 L650 83.6 L648.8 85.2 L650.3 87.3 L647.5 88.3 L645 87.5 L642.6 85.5 Z" fill="#2f9a4d"/>
<path d="M650.5 77.2 Q654 76 657 78 L659.3 80.8 L657.6 81 L658.6 83.4 L655.2 84.2 L653.4 82.3 L654.4 80.2 L651.5 80.6 Z" fill="#2f9a4d"/>
<path d="M648.9 88.4 L652.5 87.4 L655.4 88.8 L654.7 91.3 L652.6 93.5 L650.2 91.5 Z" fill="#2f9a4d"/>
<path d="M648.5 72.9 A12.7 12.7 0 1 0 660.6 93.4" stroke="#3b3a39" fill="none" stroke-width="1.1" />
<path d="M650.5 98 V100.5 M642 100.5 H659.2" stroke="#3b3a39" fill="none" stroke-width="1.1" />
<path d="M646.80 127.95 L649.60 130.85 L652.40 127.95" stroke="#3b3b3b" fill="none" stroke-width="1.15" stroke-linejoin="miter"/>
<path d="M687.5 73.5 H714.5 V100.5 H687.5 Z" stroke="none" fill="#fafafa" stroke-width="0" />
<path d="M701 100.5 H687.5 V73.5 H714.5 V88" stroke="#3b3a39" fill="none" stroke-width="1.1" />
<rect x="690.5" y="76.5" width="5.00" height="5.00" stroke="#797775" fill="#c8c6c4" stroke-width="1" />
<rect x="698.5" y="76.5" width="13.00" height="5.00" stroke="#797775" fill="#c8c6c4" stroke-width="1" />
<rect x="690.5" y="84.5" width="5.00" height="13.00" stroke="#797775" fill="#c8c6c4" stroke-width="1" />
<rect x="701.5" y="94.5" width="5.00" height="7.80" stroke="#797775" fill="#c8c6c4" stroke-width="1" />
<rect x="706.5" y="87.8" width="5.30" height="14.50" stroke="#3b3a39" fill="#ffffff" stroke-width="1.1" />
<rect x="711.8" y="90.5" width="4.70" height="11.80" stroke="#0f6cbd" fill="#83beec" stroke-width="1.1" />
<path d="M697.60 127.95 L700.40 130.85 L703.20 127.95" stroke="#3b3b3b" fill="none" stroke-width="1.15" stroke-linejoin="miter"/>
<path d="M734.5 149.5 H728.5 V155.5 M730.6 151.6 L735.4 156.4 M735.5 152.6 V156.5 H731.6" stroke="#797775" fill="none" stroke-width="1" />
<path d="M755.6 84.9 L761.7 83.4 V100.3 L755.6 98.4 Z" stroke="#3b3a39" fill="#ffffff" stroke-width="1.1" />
<path d="M761.7 83.6 L765 84.2 V99.4 L761.7 100.2 Z" stroke="#797775" fill="#c8c6c4" stroke-width="0.8" />
<path d="M765.3 75.4 L770.4 73.4 V100.6 L765.3 99.6 Z" stroke="#3b3a39" fill="#ffffff" stroke-width="1.1" />
<path d="M770.4 73.4 L775.6 74.8 V92 L770.4 92 Z" stroke="#0f6cbd" fill="#83beec" stroke-width="1.1" />
<circle cx="777.7" cy="95.4" r="7.4" stroke="#1e8bcd" fill="#ffffff" stroke-width="1.3" />
<path d="M770.3 95.4 H785.1 M777.7 88 V102.8 M771.6 91.6 H783.8 M771.6 99.2 H783.8" stroke="#1e8bcd" fill="none" stroke-width="1.1" />
<ellipse cx="777.7" cy="95.4" rx="3.3" ry="7.4" stroke="#1e8bcd" fill="none" stroke-width="1.1"/>
<path d="M779.20 128.15 L782.00 131.05 L784.80 128.15" stroke="#3b3b3b" fill="none" stroke-width="1.15" stroke-linejoin="miter"/>
<path d="M811.5 72 V86 M809.4 74.5 H825 M809.4 83.5 H825" stroke="#3b3a39" fill="none" stroke-width="1" />
<path d="M811.5 95 V109 M809.4 97.5 H825 M809.4 106.5 H825" stroke="#3b3a39" fill="none" stroke-width="1" />
<path d="M811.5 118 V132 M809.4 120.5 H825 M809.4 129.5 H825" stroke="#3b3a39" fill="none" stroke-width="1" />
<path d="M812.3 80 L814.7 77.8 L817.1 80.7 L820 77.4 L822.5 80.7 L824.7 78" stroke="#1e8bcd" fill="none" stroke-width="1.1" />
<rect x="813.4" y="101" width="1.80" height="3.60" stroke="#0f6cbd" fill="#83beec" stroke-width="1" />
<rect x="817.3" y="99.8" width="2.50" height="4.80" stroke="#0f6cbd" fill="#83beec" stroke-width="1" />
<rect x="822" y="100.6" width="2.00" height="4.00" stroke="#0f6cbd" fill="#83beec" stroke-width="1" />
<rect x="813.3" y="122.5" width="2.00" height="2.20" stroke="#0f6cbd" fill="#83beec" stroke-width="1" />
<rect x="817.5" y="124.9" width="2.20" height="2.20" stroke="#3b3a39" fill="#ffffff" stroke-width="1" />
<rect x="821.9" y="122.5" width="2.00" height="2.20" stroke="#0f6cbd" fill="#83beec" stroke-width="1" />
<rect x="903.5" y="71.5" width="15.00" height="15.00" stroke="#3b3a39" fill="#fafafa" stroke-width="1.1" />
<rect x="903.5" y="71.5" width="15.00" height="3.10" stroke="#3b3a39" fill="#c8c6c4" stroke-width="1.1" />
<path d="M906.2 76.7 H915.6" stroke="#0f6cbd" fill="none" stroke-width="1.6" />
<path d="M906.8 76.5 V79.4" stroke="#0f6cbd" fill="none" stroke-width="1.2" />
<rect x="906.3" y="81.5" width="4.70" height="2.50" stroke="none" fill="#c8c6c4" stroke-width="0" />
<path d="M909.2 78.4 H919 L915.2 82.8 V86.4 H912.7 V82.8 Z" stroke="#3b3a39" fill="#ffffff" stroke-width="1.1" />
<rect x="903.5" y="96.5" width="15.00" height="11.10" stroke="#3b3a39" fill="#fafafa" stroke-width="1.1" />
<rect x="903.5" y="96.5" width="15.00" height="3.00" stroke="#3b3a39" fill="#c8c6c4" stroke-width="1.1" />
<rect x="906.4" y="102.5" width="2.20" height="2.20" stroke="#797775" fill="#ffffff" stroke-width="1" />
<path d="M909.2 101.1 H919 L915.2 105.5 V109.4 H912.7 V105.5 Z" stroke="#3b3a39" fill="#ffffff" stroke-width="1.1" />
<path d="M1007 89.8 H1011.25 A6.45 6.45 0 0 0 1011.25 76.9 H1003.45 A6.45 6.45 0 0 0 1002.4 89.7" stroke="#3b3a39" fill="none" stroke-width="1.3" />
<path d="M1015 84.05 H1010.55 A6.45 6.45 0 0 0 1010.55 96.95 H1018.45 A6.45 6.45 0 0 0 1019.4 84.15" stroke="#3b3a39" fill="none" stroke-width="1.3" />
<path d="M1060.9 85.9 L1073 76.6 L1070.8 91.3 M1065.4 83 L1071.5 86" stroke="#1e8bcd" fill="none" stroke-width="1.5" stroke-linejoin="round"/>
<path d="M1063.70 126.05 L1066.50 128.95 L1069.30 126.05" stroke="#3b3b3b" fill="none" stroke-width="1.15" stroke-linejoin="miter"/>
<path d="M1121.70 126.05 L1124.50 128.95 L1127.30 126.05" stroke="#3b3b3b" fill="none" stroke-width="1.15" stroke-linejoin="miter"/>
<path d="M1117.8 90.3 H1122.6 V88.6 C1119.8 87.3 1118.4 85.3 1118.4 83.2 C1118.4 79.5 1121.2 76.9 1125 76.9 C1128.8 76.9 1131.6 79.5 1131.6 83.2 C1131.6 85.3 1130.2 87.3 1127.4 88.6 V90.3 H1132.2" stroke="#3b3a39" fill="none" stroke-width="1.2" />
<path d="M1178 157 L1182.7 152.2 L1187.4 157" stroke="#444" fill="none" stroke-width="1.2" />
<path d="M94 182 H101.6 L97.8 186 Z" stroke="none" fill="#666" stroke-width="0" />
<rect x="122" y="180" width="2.00" height="2.00" stroke="none" fill="#a3a3a3" stroke-width="0" />
<rect x="122" y="184" width="2.00" height="2.00" stroke="none" fill="#a3a3a3" stroke-width="0" />
<rect x="122" y="188" width="2.00" height="2.00" stroke="none" fill="#a3a3a3" stroke-width="0" />
<path d="M152 181 L162 190 M162 181 L152 190" stroke="#bcbcbc" fill="none" stroke-width="1.7" />
<path d="M187.3 186 L191.5 189.6 L200 181.3" stroke="#c4c4c4" fill="none" stroke-width="2.3" />
<path d="M231.4 180.6 C230.8 179 228.9 179 228.4 181 L226.4 188.6 C226 190.4 224.6 190.8 223.7 190 M225.4 183.7 H230.3" stroke="#4a4a4a" fill="none" stroke-width="1.5" stroke-linecap="round"/>
<path d="M1179.6 182.2 L1182.8 185.6 L1186 182.2" stroke="#5a5a5a" fill="none" stroke-width="1.8" />
<path d="M58.6 349.8 L45.8 355.8 V359.9 L54.3 356.2 V388 H59.3 V349.8 Z" stroke="none" fill="#185c37" stroke-width="0" />
<path d="M104 212.5 V279.7 H36.3 Z" stroke="none" fill="#b2b2b2" stroke-width="0" />
<path d="M1182 219.5 L1185.5 215.5 L1189 219.5 Z" stroke="none" fill="#666" stroke-width="0" />
<path d="M1182 668.5 L1185.5 672.5 L1189 668.5 Z" stroke="none" fill="#666" stroke-width="0" />
<path d="M743.9 688 L740 691.5 L743.9 695 Z" stroke="none" fill="#666" stroke-width="0" />
<path d="M1166 688 L1169.9 691.5 L1166 695 Z" stroke="none" fill="#666" stroke-width="0" />
<rect x="718" y="686" width="2.00" height="2.00" stroke="none" fill="#a3a3a3" stroke-width="0" />
<rect x="718" y="690" width="2.00" height="2.00" stroke="none" fill="#a3a3a3" stroke-width="0" />
<rect x="718" y="694" width="2.00" height="2.00" stroke="none" fill="#a3a3a3" stroke-width="0" />
<path d="M32 687 L27.6 690.5 L32 694 Z" stroke="none" fill="#c2c2c2" stroke-width="0" />
<path d="M57 687 L61.4 690.5 L57 694 Z" stroke="none" fill="#c2c2c2" stroke-width="0" />
<circle cx="402" cy="690.8" r="7.8" stroke="#6a6a6a" fill="none" stroke-width="1" />
<path d="M398 690.8 H406 M402 686.8 V694.8" stroke="#5a5a5a" fill="none" stroke-width="1.3" />
<circle cx="184.1" cy="710.9" r="1.7" stroke="#444" fill="none" stroke-width="1" />
<path d="M183 713.8 L179 712.6 L178.6 713.7 L182 715.5 V718 L180.3 722.1 L181.5 722.6 L184.1 718.4 L185 719.6 M185.2 713.8 L189.2 712.6 L189.6 713.7 L186.2 715.5 V716.8 M183 713.8 H185.2" stroke="#444" fill="none" stroke-width="1" stroke-linejoin="round"/>
<path d="M186.2 717.4 L191.8 722.7 M191.8 717.4 L186.2 722.7" stroke="#444" fill="none" stroke-width="1.1" />
<rect x="898.5" y="709.5" width="12.00" height="12.00" stroke="#444" fill="none" stroke-width="1" />
<path d="M898.5 713.5 H910.5 M898.5 717.5 H910.5 M902.5 709.5 V721.5 M906.5 709.5 V721.5" stroke="#444" fill="none" stroke-width="1" />
<rect x="938.6" y="709.7" width="12.80" height="11.60" stroke="#444" fill="none" stroke-width="1.2" />
<rect x="941.5" y="711.5" width="7.00" height="7.70" stroke="#444" fill="none" stroke-width="1" />
<path d="M943.2 713.4 H947 M943.2 715.35 H947 M943.2 717.3 H947" stroke="#444" fill="none" stroke-width="0.9" />
<path d="M978.6 709.7 V721.3 H991.4 V709.7 Z" stroke="#444" fill="none" stroke-width="1.2" />
<path d="M978.5 716 H986.4 V709.5 M982.7 709.5 V716" stroke="#444" fill="none" stroke-width="1.1" />
<path d="M1011.3 715.8 H1018.8" stroke="#444" fill="none" stroke-width="1.1" />
<path d="M1024.2 715.8 H1119.4" stroke="#555" fill="none" stroke-width="1" />
<path d="M1074.5 713.6 V718.4" stroke="#555" fill="none" stroke-width="1" />
<rect x="1119" y="710.6" width="4.80" height="11.20" stroke="none" fill="#6b6b6b" stroke-width="0" />
<path d="M1129 715.8 H1136.6 M1132.8 712 V719.6" stroke="#444" fill="none" stroke-width="1.1" />
<path d="M594 339.8 H252" stroke="#000" fill="none" stroke-width="3" />
<path d="M239.4 339.8 L257.5 334.3 L253 339.8 L257.5 346 Z" stroke="#000" fill="#000" stroke-width="0.5" />
<path d="M335.5 536.8 L128 421.5" stroke="#000" fill="none" stroke-width="3.2" />
<path d="M116 414.7 L133.8 417.3 L128.8 421.9 L128.5 428.4 Z" stroke="#000" fill="#000" stroke-width="0.5" />
<g stroke="#fff" stroke-width="3.2" fill="none" stroke-linejoin="round"><path d="M95 410 H111 M103 402.5 V417.5 M100 405 L103 401.8 L106 405 M100 415 L103 418.2 L106 415"/></g>
<g stroke="#000" stroke-width="1.6" fill="#000"><path d="M95 410 H111 M103 403.5 V416.5" fill="none"/><path d="M100.3 405 L103 402 L105.7 405 Z M100.3 415 L103 418 L105.7 415 Z" stroke-width="0.6"/></g>
</svg>

</div>
</body></html>
